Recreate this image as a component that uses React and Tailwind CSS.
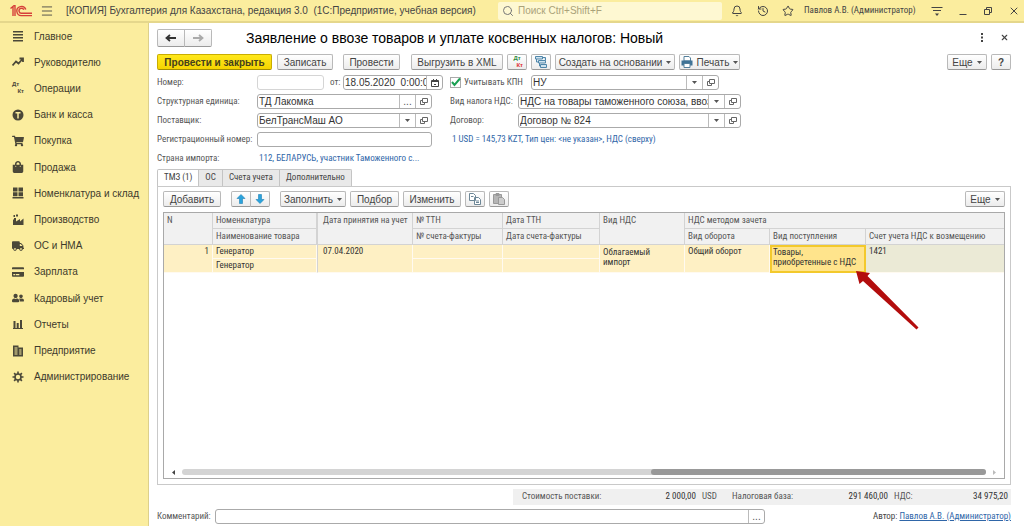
import { useState } from 'react'
import { Bell, History, Star, Search, Menu, X } from 'lucide-react'
import { FaShoppingCart, FaShoppingBag, FaTruck, FaCreditCard, FaUserFriends } from 'react-icons/fa'

const iconClass = "h-3 w-3 text-[#4b4838]"

const Svg = ({children}) => (
  <svg viewBox="0 0 12 12" className={iconClass} fill="currentColor" aria-hidden="true">{children}</svg>
)

const menuItems = [
  { title: "Главное", icon: <Svg><path d="M1 1h10v1.5H1zM1 4h10v1.5H1zM1 7h10v1.5H1zM1 10h10v1.5H1z" /></Svg> },
  { title: "Руководителю", icon: <Svg><path d="M0.5 9.5L4 5.5l2.5 2L10.500 3M7.500 2.500H11V6" fill="none" stroke="currentColor" strokeWidth="1.800" /></Svg> },
  { title: "Операции", icon: <DtKt debit="text-[#4b4838]" credit="text-[#4b4838]" /> },
  { title: "Банк и касса", icon: <Svg><circle cx="6" cy="6" r="5.500" /><path d="M3.500 3.700h5M6 3.700V9.500" stroke="#fbed9e" strokeWidth="1.500" /></Svg> },
  { title: "Покупка", icon: <FaShoppingCart className={iconClass} /> },
  { title: "Продажа", icon: <FaShoppingBag className={iconClass} /> },
  { title: "Номенклатура и склад", icon: <Svg><path d="M1 0.500h4.500v4H1zM6.500 0.500H11v4H6.500zM1 5.300h4.500v4H1zM6.500 5.300H11v4H6.500zM0.500 10h11v1.500h-11z" /></Svg> },
  { title: "Производство", icon: <Svg><path d="M1 11V5.500h1V4h2v3.500L8 5v2.500L11.500 4.500V11zM1.500 1h1.500v2H1.500zM4 0.500h2v2H4z" /></Svg> },
  { title: "ОС и НМА", icon: <FaTruck className={iconClass} /> },
  { title: "Зарплата", icon: <FaCreditCard className={iconClass} /> },
  { title: "Кадровый учет", icon: <FaUserFriends className={iconClass} /> },
  { title: "Отчеты", icon: <Svg><path d="M1.500 3h2v7h-2zM4.700 5h2v5h-2zM8 2h2v8H8zM1 10h10v1H1z" /></Svg> },
  { title: "Предприятие", icon: <Svg><path fillRule="evenodd" d="M1 0.500h5.500v2H11V11.500H1zM2.500 2.500v1h3v-1zM2.500 4.500v1h3v-1zM2.500 6.500v1h3v-1zM2.500 8.500v1h3v-1zM7.200 4.500v1h2.300v-1zM7.200 6.500v1h2.300v-1zM7.200 8.500v1h2.300v-1z" /></Svg> },
  { title: "Администрирование", icon: <Svg><path d="M6 0.500v11M0.500 6h11M2.100 2.100l7.800 7.800M9.900 2.100L2.100 9.900" stroke="currentColor" strokeWidth="1.600" /><circle cx="6" cy="6" r="3" fill="#fbed9e" stroke="currentColor" strokeWidth="1.600" /></Svg> },
]

const tabs = ["ТМЗ (1)", "ОС", "Счета учета", "Дополнительно"]

function DtKt({debit, credit}) {
  return (
    <span className="flex h-[14px] w-3 flex-col font-['Liberation_Sans',sans-serif] text-[6px] leading-[7px] font-bold" aria-hidden="true">
      <span className={debit}>Дт</span>
      <span className={`self-end ${credit}`}>Кт</span>
    </span>
  )
}

function Logo() {
  return (
    <svg viewBox="0 0 22 12" className="h-3 w-[22px]" fill="none" stroke="#d6403a" strokeWidth="1.400" aria-label="1С">
      <path d="M0.500 3.500L3 1.500V11M5 11V0.800H3.500" />
      <path d="M15.800 4.500A4.600 4.600 0 1 0 11.800 10.600H22" />
      <path d="M13.800 4.800A2.500 2.500 0 1 0 11.800 8.300H22" />
    </svg>
  )
}

const Caret = () => (
  <svg viewBox="0 0 5 3" className="h-[3px] w-[5px] shrink-0" fill="#555" aria-hidden="true"><path d="M0 0h5L2.500 3z" /></svg>
)

const OpenIcon = () => (
  <svg viewBox="0 0 9 9" className="h-[9px] w-[9px]" fill="none" stroke="#666" aria-hidden="true">
    <path d="M3.500 1.500h5v4h-5zM3.500 3.500h-2v4h4v-2" />
  </svg>
)

const Arrow = ({className, flip}) => (
  <svg viewBox="0 0 12 8" className={`h-2 w-3 ${className}`} fill="none" stroke="currentColor" strokeWidth="1.800" aria-hidden="true">
    <path d={flip ? "M1 4h9.500M7 1l3.500 3L7 7" : "M11 4H1.500M5 1L1.500 4 5 7"} />
  </svg>
)

const BlueArrow = ({down}) => (
  <svg viewBox="0 0 10 10" className="h-[10px] w-[10px]" fill="#2ba3dc" stroke="#1d7fb5" strokeWidth="0.600" aria-hidden="true">
    <path d={down ? "M5 9.500L1 5.500h2.500v-5h3v5H9z" : "M5 0.500L1 4.500h2.500v5h3v-5H9z"} />
  </svg>
)

const CalendarIcon = () => (
  <svg viewBox="0 0 8 8" className="h-2 w-2" fill="none" stroke="#444" aria-hidden="true">
    <path d="M0.500 1.500h7v6h-7zM0.500 2.500h7M2.500 0v2M5.500 0v2M3 5.500h2" />
  </svg>
)

const buttonClass = "flex h-4 items-center justify-center gap-1 rounded-xs border border-[#b9b9b9] border-b-[#999] bg-linear-to-b from-white to-[#ececec] whitespace-nowrap text-[#444]"

function Button({children, className = "", label}) {
  return <button type="button" aria-label={label} className={`${buttonClass} ${className}`}>{children}</button>
}

function Field({id, value, buttons = [], className = "", label, border = "border-[#aaa]"}) {
  return (
    <div className={`flex h-[15px] overflow-hidden rounded-[3px] border bg-white ${border} ${className}`}>
      <input id={id} aria-label={label} type="text" defaultValue={value} className="w-0 min-w-0 flex-1 pl-px text-[10px] leading-[13px] text-[#333] outline-none" />
      {buttons.map(kind => (
        <button key={kind} type="button" aria-label={kind} className="flex w-4 shrink-0 items-center justify-center border-l border-[#bbb] text-[#555]">
          {kind === "Список" && <Caret />}
          {kind === "Открыть" && <OpenIcon />}
          {kind === "Выбрать" && <span className="leading-[8px]">...</span>}
          {kind === "Календарь" && <CalendarIcon />}
        </button>
      ))}
    </div>
  )
}

const small = "font-['Roboto_Condensed','Liberation_Sans_Narrow','Liberation_Sans',sans-serif] text-[9px] whitespace-nowrap"
const labelClass = `${small} shrink-0 text-[#555]`

function TitleBar() {
  return (
    <header className="flex h-[23px] shrink-0 items-center border-b-2 border-[#e5d78c] bg-[#fbed9e] pr-1 pl-[10px] text-[#444]">
      <Logo />
      <button type="button" aria-label="Меню" className="ml-2"><Menu className="h-[14px] w-[14px]" strokeWidth={1.5} /></button>
      <span className="ml-3 whitespace-pre text-[10px]">[КОПИЯ] Бухгалтерия для Казахстана, редакция 3.0  (1С:Предприятие, учебная версия)</span>
      <div className="ml-auto flex h-[18px] w-[224px] items-center gap-1 rounded-xs bg-[#fef8d2] px-1">
        <Search className="h-3 w-3 text-[#777]" strokeWidth={2} />
        <input type="text" aria-label="Поиск" placeholder="Поиск Ctrl+Shift+F" className="min-w-0 flex-1 text-[10px] outline-none placeholder:text-[#aaa27a]" />
      </div>
      <button type="button" aria-label="Уведомления" className="ml-[9px]"><Bell className="h-3 w-3" strokeWidth={2} /></button>
      <button type="button" aria-label="История" className="ml-[14px]"><History className="h-3 w-3" strokeWidth={2} /></button>
      <button type="button" aria-label="Избранное" className="ml-[13px]"><Star className="h-3 w-3" strokeWidth={2} /></button>
      <span className={`${small} ml-[10px] w-[118px]`}>Павлов А.В. (Администратор)</span>
      <button type="button" aria-label="Настройки" className="ml-[9px]">
        <svg viewBox="0 0 12 12" className="h-3 w-3" fill="none" stroke="currentColor"><path d="M0.500 2.500h11M2 5.500h8" /><path d="M4 8.500h4L6 11z" fill="currentColor" stroke="none" /></svg>
      </button>
      <button type="button" aria-label="Свернуть" className="ml-4">
        <svg viewBox="0 0 8 8" className="h-2 w-2" stroke="currentColor"><path d="M0.500 7.500h7" /></svg>
      </button>
      <button type="button" aria-label="Развернуть" className="ml-[17px]">
        <svg viewBox="0 0 8 8" className="h-2 w-2" fill="none" stroke="currentColor"><path d="M0.500 2.500h5v5h-5zM2.500 2.500v-2h5v5h-2" /></svg>
      </button>
      <button type="button" aria-label="Закрыть" className="ml-4"><X className="h-3 w-3" strokeWidth={2} /></button>
    </header>
  )
}

function Sidebar() {
  return (
    <nav className="w-[149px] shrink-0 border-r border-[#ddd08b] bg-[#fbed9e]">
      <ul className="flex h-[367px] flex-col justify-between">
        {menuItems.map(item => (
          <li key={item.title}>
            <a href="#" className="flex h-[26px] items-center gap-[10px] pl-3 text-[10px] whitespace-nowrap text-[#3d3a2c]">
              {item.icon}
              {item.title}
            </a>
          </li>
        ))}
      </ul>
    </nav>
  )
}

function Toolbar() {
  return (
    <div className="mt-2 flex">
      <button type="button" className="h-4 w-[115px] rounded-xs border border-[#c9ad00] border-b-[#a38c00] bg-linear-to-b from-[#ffe81a] to-[#f5d400] font-bold whitespace-nowrap text-[#45401c]">Провести и закрыть</button>
      <Button className="ml-[5px] w-[56px]">Записать</Button>
      <Button className="ml-[10px] w-[57px]">Провести</Button>
      <Button className="ml-[11px] w-[92px]">Выгрузить в XML</Button>
      <Button className="ml-1 w-5" label="Проводки"><DtKt debit="text-[#2c8a3c]" credit="text-[#e03030]" /></Button>
      <Button className="ml-1 w-5" label="Структура подчиненности">
        <svg viewBox="0 0 12 12" className="h-3 w-3" fill="#cfe3ef" stroke="#4f86aa" aria-hidden="true">
          <path d="M0.500 0.500h7v2.500h-7zM3.500 4.500h7v2.500h-7zM5.500 8.500h6v3h-6zM1.500 3v3h2M4.500 7v3h1M7.500 1.500h3v3" />
        </svg>
      </Button>
      <Button className="ml-1 w-[120px]">Создать на основании <Caret /></Button>
      <Button className="ml-1 w-[61px]">
        <svg viewBox="0 0 12 12" className="h-3 w-3 shrink-0" aria-hidden="true">
          <path d="M3 0.500h5l1.500 1.500v3H3z" fill="#fff" stroke="#54809c" />
          <path d="M0.500 4.500h11v5h-11z" fill="#3f7396" />
          <path d="M3 7.500h6v4H3z" fill="#fff" stroke="#54809c" />
        </svg>
        Печать <Caret />
      </Button>
      <Button className="ml-auto w-10">Еще <Caret /></Button>
      <Button className="ml-1 w-5 font-bold" label="Справка">?</Button>
    </div>
  )
}

function DocumentForm() {
  const [kpn, setKpn] = useState(true)
  const left = "flex w-[293px] shrink-0 items-center"
  const row = "flex h-[15px] items-center"

  return (
    <div className="mt-[5px] flex flex-col gap-1">
      <div className={row}>
        <div className={left}>
          <label htmlFor="number" className={`${labelClass} w-[100px]`}>Номер:</label>
          <Field id="number" className="w-[67px]" border="border-[#d5d5d5]" />
          <label htmlFor="date" className={`${labelClass} w-[19px] pl-[6px]`}>от:</label>
          <Field id="date" value="18.05.2020  0:00:00" buttons={["Календарь"]} className="w-[100px]" />
        </div>
        <span className="relative flex h-[11px] w-[11px] shrink-0">
          <input id="kpn" type="checkbox" checked={kpn} onChange={e => setKpn(e.target.checked)} className="h-[11px] w-[11px] appearance-none border border-[#aaa] bg-white" />
          {kpn && <svg viewBox="0 0 11 11" className="pointer-events-none absolute inset-0" fill="none" stroke="#1aa053" strokeWidth="2"><path d="M2 5l2.500 3L10 1.500" /></svg>}
        </span>
        <label htmlFor="kpn" className={`${labelClass} w-[70px] pl-[3px]`}>Учитывать КПН</label>
        <Field label="Вид учета" value="НУ" buttons={["Список", "Открыть"]} className="w-[188px]" />
      </div>
      <div className={row}>
        <div className={left}>
          <label htmlFor="unit" className={`${labelClass} w-[100px]`}>Структурная единица:</label>
          <Field id="unit" value="ТД Лакомка" buttons={["Выбрать", "Открыть"]} className="w-[175px]" />
        </div>
        <label htmlFor="vat" className={`${labelClass} w-[68px]`}>Вид налога НДС:</label>
        <Field id="vat" value="НДС на товары таможенного союза, ввозимые" buttons={["Список", "Открыть"]} className="w-[223px]" />
      </div>
      <div className={row}>
        <div className={left}>
          <label htmlFor="supplier" className={`${labelClass} w-[100px]`}>Поставщик:</label>
          <Field id="supplier" value="БелТрансМаш АО" buttons={["Список", "Открыть"]} className="w-[175px]" />
        </div>
        <label htmlFor="contract" className={`${labelClass} w-[68px]`}>Договор:</label>
        <Field id="contract" value="Договор № 824" buttons={["Список", "Открыть"]} className="w-[223px]" />
      </div>
      <div className={row}>
        <div className={left}>
          <label htmlFor="reg" className={`${labelClass} w-[100px]`}>Регистрационный номер:</label>
          <Field id="reg" className="w-[175px]" />
        </div>
        <a href="#" className={`${small} pl-[2px] text-[#2f66a8]`}>1 USD = 145,73 KZT, Тип цен: &lt;не указан&gt;, НДС (сверху)</a>
      </div>
      <div className={row}>
        <span className={`${labelClass} w-[102px]`}>Страна импорта:</span>
        <a href="#" className={`${small} text-[#2f66a8]`}>112, БЕЛАРУСЬ, участник Таможенного с...</a>
      </div>
    </div>
  )
}

const th = "h-4 border-r border-b border-[#d3d3d3] px-[3px] text-left align-top leading-[14px] font-normal text-[#555]"
const td = "h-[14px] border-r border-b border-[#fffaf0] px-[3px] align-top"

function GoodsTable() {
  return (
    <table className={`${small} w-full table-fixed border-separate border-spacing-0 text-[#333]`}>
      <colgroup>
        <col className="w-[49px]" />
        <col className="w-[104px]" />
        <col className="w-[96px]" />
        <col className="w-[90px]" />
        <col className="w-[97px]" />
        <col className="w-[85px]" />
        <col className="w-[85px]" />
        <col className="w-[96px]" />
        <col />
      </colgroup>
      <thead className="bg-[#f1f1f1]">
        <tr>
          <th rowSpan={2} className={th}>N</th>
          <th className={th}>Номенклатура</th>
          <th rowSpan={2} className={`${th} border-l`}><span className="pl-[2px]">Дата принятия на учет</span></th>
          <th className={th}>№ ТТН</th>
          <th className={th}>Дата ТТН</th>
          <th rowSpan={2} className={th}>Вид НДС</th>
          <th colSpan={3} className={`${th} border-r-0`}>НДС методом зачета</th>
        </tr>
        <tr>
          <th className={th}>Наименование товара</th>
          <th className={th}>№ счета-фактуры</th>
          <th className={th}>Дата счета-фактуры</th>
          <th className={th}>Вид оборота</th>
          <th className={th}>Вид поступления</th>
          <th className={`${th} border-r-0`}>Счет учета НДС к возмещению</th>
        </tr>
      </thead>
      <tbody className="bg-[#fef0c4]">
        <tr>
          <td rowSpan={2} className={`${td} leading-[13px] text-right`}>1</td>
          <td className={`${td} leading-[13px]`}>Генератор</td>
          <td rowSpan={2} className={`${td} border-l border-l-[#d3d3d3] leading-[13px]`}><span className="pl-[2px]">07.04.2020</span></td>
          <td className={td}></td>
          <td className={td}></td>
          <td rowSpan={2} className={`${td} pt-[2px] leading-[10px]`}>Облагаемый<br />импорт</td>
          <td rowSpan={2} className={`${td} leading-[13px]`}>Общий оборот</td>
          <td rowSpan={2} className="relative border-2 border-[#f3c92c] bg-[#ffe48c] px-px align-top leading-[10px]">
            Товары,<br />приобретенные с НДС
            <svg viewBox="0 0 64 60" className="absolute top-full left-full -ml-2 h-[60px] w-16" fill="#b30d0d" aria-hidden="true">
              <path d="M0 0L14 2 11.500 5 62.500 56.500 60.500 58.500 7 10 3.500 13z" />
            </svg>
          </td>
          <td rowSpan={2} className={`${td} border-r-0 bg-[#ebead6] leading-[13px]`}>1421</td>
        </tr>
        <tr>
          <td className={`${td} leading-[13px]`}>Генератор</td>
          <td className={td}></td>
          <td className={td}></td>
        </tr>
      </tbody>
    </table>
  )
}

function Scrollbar() {
  return (
    <div className="mt-auto mb-[3px] flex h-[6px] items-center pr-2 pl-2">
      <svg viewBox="0 0 3 5" className="h-[5px] w-[3px]" fill="#444"><path d="M3 0v5L0 2.500z" /></svg>
      <div className="mx-[7px] flex h-[6px] flex-1 justify-end rounded-full bg-[#d4d4d4]">
        <div className="h-[6px] w-5/12 rounded-full bg-[#999]"></div>
      </div>
      <svg viewBox="0 0 3 5" className="h-[5px] w-[3px]" fill="#bbb"><path d="M0 0v5l3-2.500z" /></svg>
    </div>
  )
}

function Goods() {
  const [active, setActive] = useState(0)

  return (
    <section className="mt-[3px] flex flex-1 flex-col">
      <div className="flex" role="tablist">
        {tabs.map((tab, i) => (
          <button
            key={tab}
            type="button"
            role="tab"
            aria-selected={active === i}
            onClick={() => setActive(i)}
            className={`${small} h-[17px] border-t border-r border-[#c4c4c4] px-[6px] text-[#444] first:rounded-tl-xs first:border-l last:rounded-tr-xs ${active === i ? "relative z-10 -mb-px bg-white" : "bg-[#e9e9e9]"}`}
          >
            {tab}
          </button>
        ))}
      </div>
      <div className="flex flex-1 flex-col border border-[#c9c9c9] px-[5px] pt-1 pb-[5px]">
        <div className="flex">
          <Button className="w-[58px]">Добавить</Button>
          <Button className="ml-[10px] w-5 rounded-r-none" label="Вверх"><BlueArrow /></Button>
          <Button className="-ml-px w-5 rounded-l-none" label="Вниз"><BlueArrow down /></Button>
          <Button className="ml-[10px] w-[66px]">Заполнить <Caret /></Button>
          <Button className="ml-1 w-[49px]">Подбор</Button>
          <Button className="ml-1 w-[58px]">Изменить</Button>
          <Button className="ml-1 w-5" label="Копировать">
            <svg viewBox="0 0 12 12" className="h-3 w-3" fill="#fff" stroke="#6d8797" aria-hidden="true">
              <path d="M0.500 0.500h4l2 2v5h-6zM5.500 4.500h4l2 2v5h-6zM2 3.500h2.500M7 8h3M7 9.500h3" />
            </svg>
          </Button>
          <Button className="ml-1 w-5" label="Вставить">
            <svg viewBox="0 0 12 12" className="h-3 w-3" fill="#b5b5b5" stroke="#999" aria-hidden="true">
              <path d="M0.500 1.500h8v9h-8zM3 0.500h3v2H3z" /><path d="M5.500 4.500h4l2 2v5h-6z" fill="#ccc" />
            </svg>
          </Button>
          <Button className="ml-auto w-10">Еще <Caret /></Button>
        </div>
        <div className="mt-[5px] flex flex-1 flex-col border border-[#a9a9a9]">
          <GoodsTable />
          <Scrollbar />
        </div>
      </div>
    </section>
  )
}

function Totals() {
  return (
    <div className={`${small} mt-1 ml-auto flex h-4 w-[498px] items-center bg-[#f0f0f0] pr-[3px] pl-[9px] text-[#555]`}>
      <span className="w-[100px]">Стоимость поставки:</span>
      <span className="w-[74px] text-right text-[#333]">2 000,00</span>
      <span className="w-[36px] pl-[6px]">USD</span>
      <span className="w-[70px]">Налоговая база:</span>
      <span className="w-[86px] text-right text-[#333]">291 460,00</span>
      <span className="pl-[6px]">НДС:</span>
      <span className="ml-auto text-[#333]">34 975,20</span>
    </div>
  )
}

export default function App() {
  return (
    <div className="flex min-h-screen flex-col bg-white font-['Liberation_Sans',Arial,sans-serif] text-[10px]">
      <TitleBar />
      <div className="flex flex-1">
        <Sidebar />
        <main className="flex min-w-0 flex-1 flex-col pt-[6px] pr-[13px] pb-[2px] pl-2">
          <div className="flex h-[17px] items-center">
            <Button className="h-[18px] w-7 rounded-r-none" label="Назад"><Arrow className="text-[#333]" /></Button>
            <Button className="-ml-px h-[18px] w-7 rounded-l-none" label="Вперед"><Arrow flip className="text-[#aaa]" /></Button>
            <h1 className="ml-[34px] text-[14px] leading-4 whitespace-nowrap text-black">Заявление о ввозе товаров и уплате косвенных налогов: Новый</h1>
            <button type="button" aria-label="Дополнительные действия" className="ml-auto">
              <svg viewBox="0 0 2 9" className="h-[9px] w-[2px]" fill="#444"><path d="M0 0h2v2H0zM0 3.500h2v2H0zM0 7h2v2H0z" /></svg>
            </button>
            <button type="button" aria-label="Закрыть документ" className="mr-[2px] ml-[17px]"><X className="h-[9px] w-[9px] text-[#444]" strokeWidth={3} /></button>
          </div>
          <Toolbar />
          <DocumentForm />
          <Goods />
          <Totals />
          <div className="mt-1 flex h-[15px] items-center">
            <label htmlFor="comment" className={`${labelClass} w-[58px]`}>Комментарий:</label>
            <Field id="comment" buttons={["Выбрать"]} className="flex-1" />
            <span className={`${small} w-[246px] text-right text-[#444]`}>
              Автор: <a href="#" className="text-[#2f66a8] underline">Павлов А.В. (Администратор)</a>
            </span>
          </div>
        </main>
      </div>
    </div>
  )
}
